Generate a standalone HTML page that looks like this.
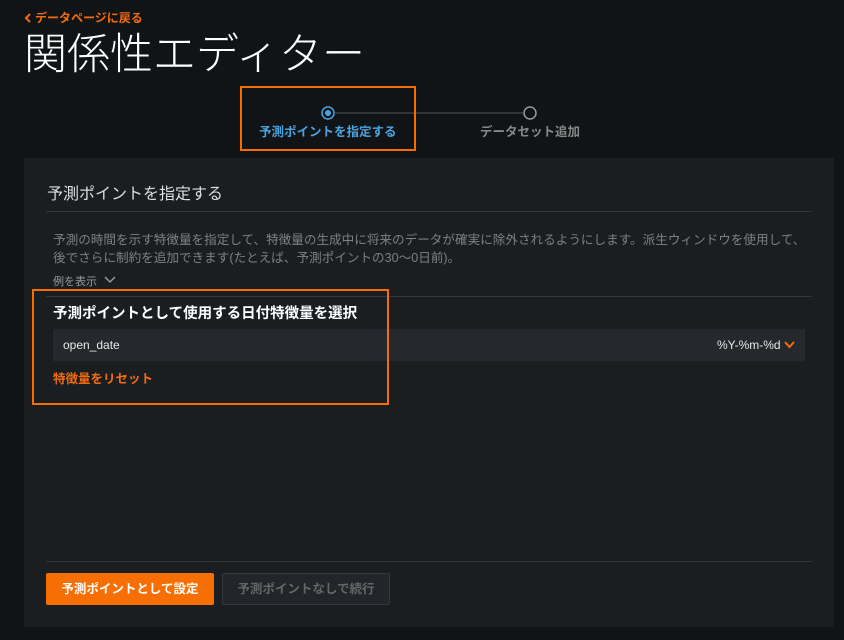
<!DOCTYPE html>
<html><head><meta charset="utf-8"><style>
*{margin:0;padding:0;box-sizing:border-box}
body{width:844px;height:640px;background:#111416;font-family:"Liberation Sans","Noto Sans CJK JP",sans-serif;position:relative;overflow:hidden;color:#ddd}
.a{position:absolute;white-space:nowrap}
</style></head><body>
<svg class="a" style="left:24px;top:13px" width="8" height="10"><path d="M6 1 L2 5 L6 9" fill="none" stroke="#f26b0f" stroke-width="2"/></svg>
<div class="a" style="left:35px;top:10px;font-size:12px;font-weight:bold;color:#f26b0f;line-height:16px">データページに戻る</div>
<div class="a" style="left:24px;top:23px;font-size:43px;font-weight:300;color:#fff;line-height:56px;font-family:'Noto Sans CJK JP',sans-serif">関係性エディター</div>
<svg class="a" style="left:0;top:0" width="844" height="160">
<line x1="335" y1="113" x2="523" y2="113" stroke="#555" stroke-width="1"/>
<circle cx="328" cy="113" r="6" fill="none" stroke="#4aa3df" stroke-width="1.5"/>
<circle cx="328" cy="113" r="3" fill="#4aa3df"/>
<circle cx="530" cy="113" r="6" fill="none" stroke="#999" stroke-width="1.5"/>
</svg>
<div class="a" style="left:259px;top:121px;font-size:12.5px;font-weight:bold;color:#4aa3df">予測ポイントを指定する</div>
<div class="a" style="left:480px;top:121px;font-size:12.5px;font-weight:bold;color:#888">データセット追加</div>
<div class="a" style="left:240px;top:86px;width:176px;height:65px;border:2px solid #f76e05"></div>
<div class="a" style="left:24px;top:158px;width:810px;height:469px;background:#1b1e21"></div>
<div class="a" style="left:47px;top:180px;font-size:16px;color:#ddd">予測ポイントを指定する</div>
<div class="a" style="left:46px;top:211px;width:766px;height:1px;background:#33373a"></div>
<div class="a" style="left:53px;top:231px;font-size:12.6px;color:#7d8083;line-height:18px">予測の時間を示す特徴量を指定して、特徴量の生成中に将来のデータが確実に除外されるようにします。派生ウィンドウを使用して、<br>後でさらに制約を追加できます(たとえば、予測ポイントの30〜0日前)。</div>
<div class="a" style="left:53px;top:273px;font-size:11px;color:#999">例を表示</div>
<svg class="a" style="left:104px;top:276px" width="12" height="8"><path d="M1 1 L6 6 L11 1" fill="none" stroke="#999" stroke-width="1.5"/></svg>
<div class="a" style="left:46px;top:296px;width:766px;height:1px;background:#33373a"></div>
<div class="a" style="left:53px;top:302px;font-size:14.5px;font-weight:bold;color:#fff">予測ポイントとして使用する日付特徴量を選択</div>
<div class="a" style="left:53px;top:329px;width:752px;height:32px;background:#25292d"></div>
<div class="a" style="left:63px;top:338px;font-size:12px;color:#e8e8e8">open_date</div>
<div class="a" style="left:717px;top:338px;font-size:12px;color:#e8e8e8">%Y-%m-%d</div>
<svg class="a" style="left:784px;top:341px" width="11" height="8"><path d="M1 1 L5.5 6 L10 1" fill="none" stroke="#f76e05" stroke-width="2"/></svg>
<div class="a" style="left:53px;top:368px;font-size:12.5px;font-weight:bold;color:#f26b0f">特徴量をリセット</div>
<div class="a" style="left:32px;top:289px;width:357px;height:116px;border:2px solid #f76e05"></div>
<div class="a" style="left:46px;top:561px;width:766px;height:1px;background:#33373a"></div>
<div class="a" style="left:46px;top:573px;width:168px;height:32px;background:#f76e05;border-radius:2px;color:#fff;font-size:12.5px;font-weight:bold;text-align:center;line-height:32px">予測ポイントとして設定</div>
<div class="a" style="left:222px;top:573px;width:168px;height:32px;background:#22262a;border:1px solid #34383c;border-radius:2px;color:#666;font-size:12.5px;font-weight:bold;text-align:center;line-height:30px">予測ポイントなしで続行</div>
</body></html>
